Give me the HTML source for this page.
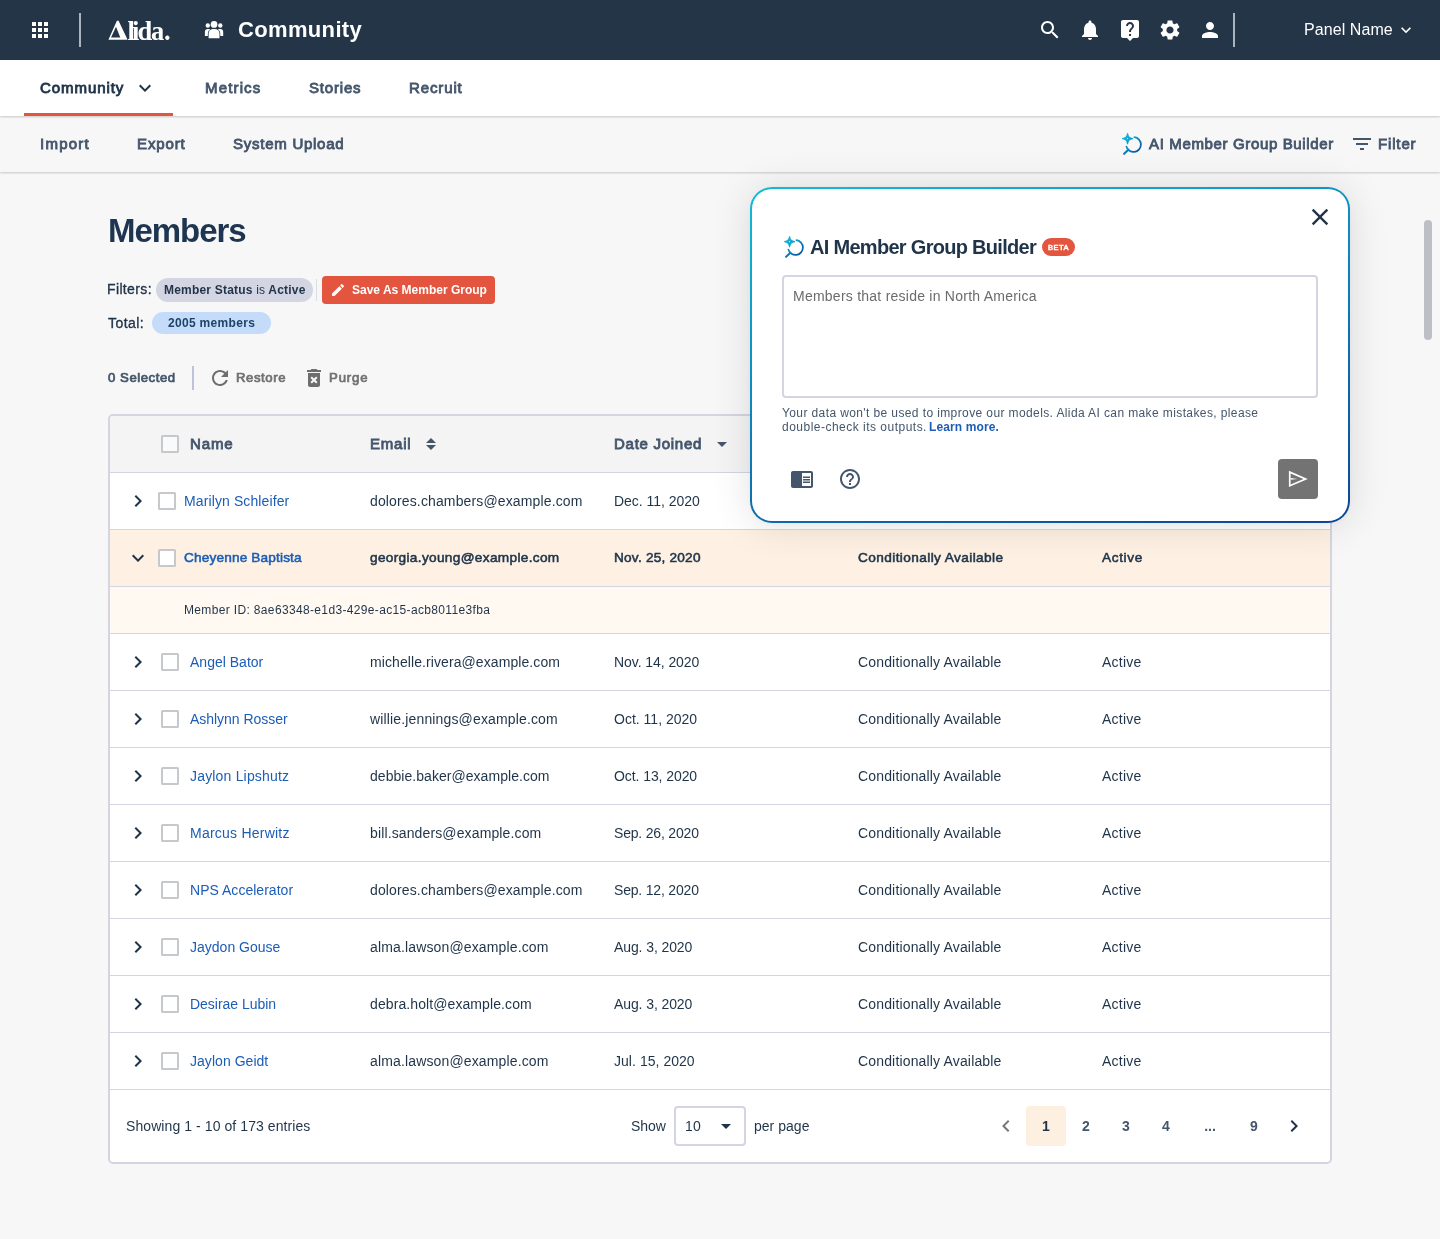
<!DOCTYPE html>
<html lang="en"><head><meta charset="utf-8"><title>Members</title>
<style>
*{box-sizing:border-box;margin:0;padding:0}
html,body{width:1440px;height:1239px;overflow:hidden}
body{position:relative;background:#f7f7f7;font-family:"Liberation Sans",sans-serif;color:#1f3349}
.a,.t,.i{position:absolute}
.t{white-space:nowrap;display:block;will-change:transform}
.i{display:block}
#hdr{left:0;top:0;width:1440px;height:60px;background:#243548}
#nav{left:0;top:60px;width:1440px;height:56px;background:#fff;box-shadow:0 1px 2px rgba(0,0,0,.2)}
#navu{left:24px;top:113px;width:149px;height:3px;background:#e4553d}
#tb{left:0;top:116px;width:1440px;height:56px;background:#f7f7f7;box-shadow:0 1px 2px rgba(0,0,0,.2)}
.vd{width:2px;background:#a9b4c0}
#tbl{left:108px;top:414px;width:1224px;height:750px;border:2px solid #d4d5e2;border-radius:5px;background:#fff;overflow:hidden}
#tbl .r{position:absolute;left:0;width:1220px;border-bottom:1px solid #d4d5e2}
.cb{width:18px;height:18px;border:2px solid #c6c9cc;border-radius:1.5px;background:#fff}
.chip{border-radius:12px}
#pop{left:750px;top:187px;width:600px;height:336px;border-radius:22px;background:linear-gradient(165deg,#10bcd8,#0a4595);box-shadow:0 2px 40px rgba(0,0,0,.12),0 1px 4px rgba(0,0,0,.03)}
#pop .in{position:absolute;left:2px;top:2px;right:2px;bottom:2px;border-radius:20px;background:#fff}
#ta{left:782px;top:275px;width:536px;height:123px;border:2px solid #d4d5e2;border-radius:4px;background:#fff}
#send{left:1278px;top:459px;width:40px;height:40px;border-radius:4px;background:#737373}
#sel{left:674px;top:1106px;width:72px;height:40px;border:2px solid #d4d5e2;border-radius:4px;background:#fff}
#pg1{left:1026px;top:1106px;width:40px;height:40px;border-radius:4px;background:#fef0e1}
#sb{left:1424px;top:220px;width:8px;height:120px;border-radius:4px;background:#bcbfc5}

</style></head>
<body>
<div class="a" id="hdr"></div>
<div class="a" id="tb"></div>
<div class="a" id="nav"></div>
<div class="a" id="navu"></div>
<svg class="i" style="left:28px;top:18px" width="24" height="24" viewBox="0 0 24 24"><path fill="#fff" d="M4 8h4V4H4v4zm6 12h4v-4h-4v4zm-6 0h4v-4H4v4zm0-6h4v-4H4v4zm6 0h4v-4h-4v4zm6-10v4h4V4h-4zm-6 4h4V4h-4v4zm6 6h4v-4h-4v4zm0 6h4v-4h-4v4z"/></svg>
<div class="a vd" style="left:79px;top:13px;height:34px"></div>
<svg class="i" style="left:104px;top:14px;will-change:transform" width="72" height="32" viewBox="104 14 72 32"><path fill="#fff" fill-rule="evenodd" d="M108.4 39.8L116.9 20.7L118.6 20.7L127.6 39.8ZM116 26.8L120.3 37.4L111 37.4Z"/><text x="127.4 132.1 137.6 150.9 163.9" y="39.8" font-family="Liberation Serif" font-weight="700" font-size="26.5" fill="#fff">lida.</text></svg>
<svg class="i" style="left:200px;top:16px" width="28" height="26" viewBox="200 16 28 26"><g fill="#fff"><circle cx="207.8" cy="25.5" r="2.2"/><circle cx="220.3" cy="25.5" r="2.2"/><path d="M204.9 36.1V32a3 3 0 0 1 3-3H210V36.1Z"/><path d="M223.2 36.1V32a3 3 0 0 0-3-3H218V36.1Z"/><g stroke="#243548" stroke-width="1.5" paint-order="stroke"><circle cx="214.05" cy="24.4" r="3.35"/><path d="M208.6 38.2V33.6a4.6 4.6 0 0 1 4.6-4.6h1.7a4.6 4.6 0 0 1 4.6 4.6V38.2Z"/></g></g></svg>
<svg class="i" style="left:1038px;top:18px" width="24" height="24" viewBox="0 0 24 24"><path fill="#fff" d="M15.5 14h-.79l-.28-.27C15.41 12.59 16 11.11 16 9.5 16 5.91 13.09 3 9.5 3S3 5.91 3 9.5 5.91 16 9.5 16c1.61 0 3.09-.59 4.23-1.57l.27.28v.79l5 4.99L20.49 19l-4.99-5zm-6 0C7.01 14 5 11.99 5 9.5S7.01 5 9.5 5 14 7.01 14 9.5 11.99 14 9.5 14z"/></svg>
<svg class="i" style="left:1078px;top:18px" width="24" height="24" viewBox="0 0 24 24"><path fill="#fff" d="M12 22c1.1 0 2-.9 2-2h-4c0 1.1.89 2 2 2zm6-6v-5c0-3.07-1.64-5.64-4.5-6.32V4c0-.83-.67-1.5-1.5-1.5s-1.5.67-1.5 1.5v.68C7.63 5.36 6 7.92 6 11v5l-2 2v1h16v-1l-2-2z"/></svg>
<svg class="i" style="left:1118px;top:18px" width="24" height="24" viewBox="0 0 24 24"><path fill="#fff" d="M19 2H5c-1.11 0-2 .9-2 2v14c0 1.1.89 2 2 2h4l3 3 3-3h4c1.1 0 2-.9 2-2V4c0-1.1-.9-2-2-2zm-6 16h-2v-2h2v2zm2.07-7.75l-.9.92C13.45 11.9 13 12.5 13 14h-2v-.5c0-1.1.45-2.1 1.17-2.83l1.24-1.26c.37-.36.59-.86.59-1.41 0-1.1-.9-2-2-2s-2 .9-2 2H8c0-2.21 1.79-4 4-4s4 1.79 4 4c0 .88-.36 1.68-.93 2.25z"/></svg>
<svg class="i" style="left:1158px;top:18px" width="24" height="24" viewBox="0 0 24 24"><path fill="#fff" d="M19.14 12.94c.04-.3.06-.61.06-.94 0-.32-.02-.64-.07-.94l2.03-1.58c.18-.14.23-.41.12-.61l-1.92-3.32c-.12-.22-.37-.29-.59-.22l-2.39.96c-.5-.38-1.03-.7-1.62-.94l-.36-2.54c-.04-.24-.24-.41-.48-.41h-3.84c-.24 0-.43.17-.47.41l-.36 2.54c-.59.24-1.13.57-1.62.94l-2.39-.96c-.22-.08-.47 0-.59.22L2.74 8.87c-.12.21-.08.47.12.61l2.03 1.58c-.05.3-.09.63-.09.94s.02.64.07.94l-2.03 1.58c-.18.14-.23.41-.12.61l1.92 3.32c.12.22.37.29.59.22l2.39-.96c.5.38 1.03.7 1.62.94l.36 2.54c.05.24.24.41.48.41h3.84c.24 0 .44-.17.47-.41l.36-2.54c.59-.24 1.13-.56 1.62-.94l2.39.96c.22.08.47 0 .59-.22l1.92-3.32c.12-.22.07-.47-.12-.61l-2.01-1.58zM12 15.6c-1.98 0-3.6-1.62-3.6-3.6s1.62-3.6 3.6-3.6 3.6 1.62 3.6 3.6-1.62 3.6-3.6 3.6z"/></svg>
<svg class="i" style="left:1198px;top:18px" width="24" height="24" viewBox="0 0 24 24"><path fill="#fff" d="M12 12c2.21 0 4-1.79 4-4s-1.79-4-4-4-4 1.79-4 4 1.79 4 4 4zm0 2c-2.67 0-8 1.34-8 4v2h16v-2c0-2.66-5.33-4-8-4z"/></svg>
<div class="a vd" style="left:1233px;top:13px;height:34px"></div>
<svg class="i" style="left:1396px;top:20px" width="20" height="20" viewBox="0 0 24 24"><path fill="#fff" d="M7.41 8.59L12 13.17l4.59-4.58L18 10l-6 6-6-6 1.41-1.41z"/></svg>
<svg class="i" style="left:133px;top:76px" width="24" height="24" viewBox="0 0 24 24"><path fill="#1f3349" d="M7.41 8.59L12 13.17l4.59-4.58L18 10l-6 6-6-6 1.41-1.41z"/></svg>
<svg class="i" style="left:1350px;top:132px" width="24" height="24" viewBox="0 0 24 24"><path fill="#44566c" d="M10 18h4v-2h-4v2zM3 6v2h18V6H3zm3 7h12v-2H6v2z"/></svg>
<svg class="i" style="left:1114px;top:128px" width="36" height="32" viewBox="1114 128 36 32"><defs><linearGradient id="g1" gradientUnits="userSpaceOnUse" x1="1123" y1="133" x2="1141" y2="153"><stop offset="0" stop-color="#14c4df"/><stop offset=".35" stop-color="#10a3cf"/><stop offset=".7" stop-color="#0b6db5"/><stop offset="1" stop-color="#0a4a9c"/></linearGradient></defs><path fill="url(#g1)" stroke="url(#g1)" stroke-width="1.2" stroke-linejoin="round" d="M1127.56 133.59Q1128.01 138.14 1132.56 138.59Q1128.01 139.04 1127.56 143.59Q1127.11 139.04 1122.56 138.59Q1127.11 138.14 1127.56 133.59Z"/><circle cx="1127.56" cy="138.59" r="0.6" fill="#f7f7f7"/><path fill="none" stroke="url(#g1)" stroke-width="1.75" stroke-linecap="round" d="M1134.40 137.21A7.4 7.4 0 1 1 1126.37 146.52"/><path fill="none" stroke="url(#g1)" stroke-width="2.1" stroke-linecap="round" d="M1128.30 149.80L1124.10 153.80"/></svg>
<div class="a chip" style="left:156px;top:278px;width:157px;height:24px;background:#d4d5e2"></div>
<div class="a" style="left:316px;top:279px;width:1px;height:22px;background:#dcdde4"></div>
<div class="a" style="left:322px;top:276px;width:173px;height:28px;border-radius:4px;background:#e3553e"></div>
<svg class="i" style="left:330px;top:282px" width="16" height="16" viewBox="0 0 24 24"><path fill="#fff" d="M3 17.25V21h3.75L17.81 9.94l-3.75-3.75L3 17.25zM20.71 7.04c.39-.39.39-1.02 0-1.41l-2.34-2.34c-.39-.39-1.02-.39-1.41 0l-1.83 1.83 3.75 3.75 1.83-1.83z"/></svg>
<div class="a chip" style="left:152px;top:312px;width:119px;height:22px;background:#c4dcfa"></div>
<div class="a" style="left:192px;top:366px;width:2px;height:24px;background:#bcc3da"></div>
<svg class="i" style="left:208px;top:366px" width="24" height="24" viewBox="0 0 24 24"><path fill="#6e6e6e" d="M17.65 6.35C16.2 4.9 14.21 4 12 4c-4.42 0-7.99 3.58-7.99 8s3.57 8 7.99 8c3.73 0 6.84-2.55 7.73-6h-2.08c-.82 2.33-3.04 4-5.65 4-3.31 0-6-2.69-6-6s2.69-6 6-6c1.66 0 3.14.69 4.22 1.78L13 11h7V4l-2.35 2.35z"/></svg>
<svg class="i" style="left:302px;top:366px" width="24" height="24" viewBox="0 0 24 24"><path fill="#6e6e6e" d="M6 19c0 1.1.9 2 2 2h8c1.1 0 2-.9 2-2V7H6v12zm2.46-7.12l1.41-1.41L12 12.59l2.12-2.12 1.41 1.41L13.41 14l2.12 2.12-1.41 1.41L12 15.41l-2.12 2.12-1.41-1.41L10.59 14l-2.13-2.12zM15.5 4l-1-1h-5l-1 1H5v2h14V4z"/></svg>
<div class="a" id="tbl"><div class="r" style="top:0px;height:57px;background:#f5f4f5"></div><div class="r" style="top:57px;height:57px;background:#fff"></div><div class="r" style="top:114px;height:57px;background:#fef1e3"></div><div class="r" style="top:171px;height:47px;background:#fff9f2"></div><div class="r" style="top:218px;height:57px;background:#fff"></div><div class="r" style="top:275px;height:57px;background:#fff"></div><div class="r" style="top:332px;height:57px;background:#fff"></div><div class="r" style="top:389px;height:57px;background:#fff"></div><div class="r" style="top:446px;height:57px;background:#fff"></div><div class="r" style="top:503px;height:57px;background:#fff"></div><div class="r" style="top:560px;height:57px;background:#fff"></div><div class="r" style="top:617px;height:57px;background:#fff"></div></div>
<div class="a cb" style="left:161px;top:435px;background:#fafafa"></div>
<svg class="i" style="left:419px;top:429px" width="24" height="24" viewBox="0 0 24 24"><path fill="#44566c" d="M7 14l5-5 5 5z"/></svg>
<svg class="i" style="left:419px;top:435px" width="24" height="24" viewBox="0 0 24 24"><path fill="#44566c" d="M7 10l5 5 5-5z"/></svg>
<svg class="i" style="left:710px;top:432px" width="24" height="24" viewBox="0 0 24 24"><path fill="#44566c" d="M7 10l5 5 5-5z"/></svg>
<svg class="i" style="left:126px;top:489px" width="24" height="24" viewBox="0 0 24 24"><path fill="#1f3349" d="M10 6L8.59 7.41 13.17 12l-4.58 4.59L10 18l6-6z"/></svg>
<div class="a cb" style="left:158px;top:492px"></div>
<svg class="i" style="left:126px;top:546px" width="24" height="24" viewBox="0 0 24 24"><path fill="#1f3349" d="M7.41 8.59L12 13.17l4.59-4.58L18 10l-6 6-6-6 1.41-1.41z"/></svg>
<div class="a cb" style="left:158px;top:549px"></div>
<svg class="i" style="left:126px;top:650px" width="24" height="24" viewBox="0 0 24 24"><path fill="#1f3349" d="M10 6L8.59 7.41 13.17 12l-4.58 4.59L10 18l6-6z"/></svg>
<div class="a cb" style="left:161px;top:653px"></div>
<svg class="i" style="left:126px;top:707px" width="24" height="24" viewBox="0 0 24 24"><path fill="#1f3349" d="M10 6L8.59 7.41 13.17 12l-4.58 4.59L10 18l6-6z"/></svg>
<div class="a cb" style="left:161px;top:710px"></div>
<svg class="i" style="left:126px;top:764px" width="24" height="24" viewBox="0 0 24 24"><path fill="#1f3349" d="M10 6L8.59 7.41 13.17 12l-4.58 4.59L10 18l6-6z"/></svg>
<div class="a cb" style="left:161px;top:767px"></div>
<svg class="i" style="left:126px;top:821px" width="24" height="24" viewBox="0 0 24 24"><path fill="#1f3349" d="M10 6L8.59 7.41 13.17 12l-4.58 4.59L10 18l6-6z"/></svg>
<div class="a cb" style="left:161px;top:824px"></div>
<svg class="i" style="left:126px;top:878px" width="24" height="24" viewBox="0 0 24 24"><path fill="#1f3349" d="M10 6L8.59 7.41 13.17 12l-4.58 4.59L10 18l6-6z"/></svg>
<div class="a cb" style="left:161px;top:881px"></div>
<svg class="i" style="left:126px;top:935px" width="24" height="24" viewBox="0 0 24 24"><path fill="#1f3349" d="M10 6L8.59 7.41 13.17 12l-4.58 4.59L10 18l6-6z"/></svg>
<div class="a cb" style="left:161px;top:938px"></div>
<svg class="i" style="left:126px;top:992px" width="24" height="24" viewBox="0 0 24 24"><path fill="#1f3349" d="M10 6L8.59 7.41 13.17 12l-4.58 4.59L10 18l6-6z"/></svg>
<div class="a cb" style="left:161px;top:995px"></div>
<svg class="i" style="left:126px;top:1049px" width="24" height="24" viewBox="0 0 24 24"><path fill="#1f3349" d="M10 6L8.59 7.41 13.17 12l-4.58 4.59L10 18l6-6z"/></svg>
<div class="a cb" style="left:161px;top:1052px"></div>
<div class="a" id="sel"></div>
<svg class="i" style="left:713.5px;top:1114px" width="24" height="24" viewBox="0 0 24 24"><path fill="#1f3349" d="M7 10l5 5 5-5z"/></svg>
<div class="a" id="pg1"></div>
<svg class="i" style="left:994px;top:1114px" width="24" height="24" viewBox="0 0 24 24"><path fill="#777" d="M15.41 7.41L14 6l-6 6 6 6 1.41-1.41L10.83 12z"/></svg>
<svg class="i" style="left:1282px;top:1114px" width="24" height="24" viewBox="0 0 24 24"><path fill="#1f3349" d="M10 6L8.59 7.41 13.17 12l-4.58 4.59L10 18l6-6z"/></svg>
<div class="a" id="sb"></div>
<div class="a" id="pop"><div class="in"></div></div>
<svg class="i" style="left:776px;top:231px" width="36" height="32" viewBox="776 231 36 32"><defs><linearGradient id="g2" gradientUnits="userSpaceOnUse" x1="785" y1="236" x2="803" y2="256"><stop offset="0" stop-color="#14c4df"/><stop offset=".35" stop-color="#10a3cf"/><stop offset=".7" stop-color="#0b6db5"/><stop offset="1" stop-color="#0a4a9c"/></linearGradient></defs><path fill="url(#g2)" stroke="url(#g2)" stroke-width="1.2" stroke-linejoin="round" d="M789.56 236.59Q790.01 241.14 794.56 241.59Q790.01 242.04 789.56 246.59Q789.11 242.04 784.56 241.59Q789.11 241.14 789.56 236.59Z"/><circle cx="789.56" cy="241.59" r="0.6" fill="#fff"/><path fill="none" stroke="url(#g2)" stroke-width="1.75" stroke-linecap="round" d="M796.40 240.21A7.4 7.4 0 1 1 788.37 249.52"/><path fill="none" stroke="url(#g2)" stroke-width="2.1" stroke-linecap="round" d="M790.30 252.80L786.10 256.80"/></svg>
<svg class="i" style="left:1306px;top:203px" width="28" height="28" viewBox="0 0 24 24"><path fill="#1f3349" d="M19 6.41L17.59 5 12 10.59 6.41 5 5 6.41 10.59 12 5 17.59 6.41 19 12 13.41 17.59 19 19 17.59 13.41 12z"/></svg>
<div class="a" style="left:1042px;top:238.3px;width:33px;height:17.4px;border-radius:9px;background:#e3553e"></div>
<div class="a" id="ta"></div>
<svg class="i" style="left:790px;top:467px" width="24" height="24" viewBox="0 0 24 24"><path fill="#43566c" d="M13 12h7v1.5h-7zm0-2.5h7V11h-7zm0 5h7V16h-7zM21 4H3c-1.1 0-2 .9-2 2v13c0 1.1.9 2 2 2h18c1.1 0 2-.9 2-2V6c0-1.1-.9-2-2-2zm0 15h-9V6h9v13z"/></svg>
<svg class="i" style="left:838px;top:467px" width="24" height="24" viewBox="0 0 24 24"><path fill="#43566c" d="M11 18h2v-2h-2v2zm1-16C6.48 2 2 6.48 2 12s4.48 10 10 10 10-4.48 10-10S17.52 2 12 2zm0 18c-4.41 0-8-3.59-8-8s3.59-8 8-8 8 3.59 8 8-3.59 8-8 8zm0-14c-2.21 0-4 1.79-4 4h2c0-1.1.9-2 2-2s2 .9 2 2c0 2-3 1.75-3 5h2c0-2.25 3-2.5 3-5 0-2.21-1.79-4-4-4z"/></svg>
<div class="a" id="send"></div>
<svg class="i" style="left:1278px;top:459px" width="40" height="40" viewBox="1278 459 40 40"><path fill="#fff" fill-rule="evenodd" d="M1288.9 470.8L1307.8 478.95L1288.9 487.1ZM1290.6 473.38L1303.5 478.95L1290.6 484.52Z"/><path fill="#fff" d="M1290.6 478.05L1297.6 478.95L1290.6 479.85Z"/></svg>
<span class="t" style="top:13px;font-size:22px;line-height:33px;font-weight:700;color:#fff;left:238.012px;letter-spacing:0.343px;">Community</span>
<span class="t" style="top:18px;font-size:16px;line-height:24px;font-weight:400;color:#fff;left:1303.55px;letter-spacing:0.072px;">Panel Name</span>
<span class="t" style="top:77.12px;font-size:15.04px;line-height:22.56px;font-weight:400;color:#1f3349;left:39.72px;letter-spacing:0.917px;-webkit-text-stroke:0.85px #1f3349;">Community</span>
<span class="t" style="top:77.12px;font-size:15.04px;line-height:22.56px;font-weight:400;color:#44566c;left:204.75px;letter-spacing:1.143px;-webkit-text-stroke:0.85px #44566c;">Metrics</span>
<span class="t" style="top:77.12px;font-size:15.04px;line-height:22.56px;font-weight:400;color:#44566c;left:309.155px;letter-spacing:0.799px;-webkit-text-stroke:0.85px #44566c;">Stories</span>
<span class="t" style="top:77.12px;font-size:15.04px;line-height:22.56px;font-weight:400;color:#44566c;left:409.15px;letter-spacing:0.858px;-webkit-text-stroke:0.85px #44566c;">Recruit</span>
<span class="t" style="top:133.12px;font-size:15.04px;line-height:22.56px;font-weight:400;color:#44566c;left:39.75px;letter-spacing:1.233px;-webkit-text-stroke:0.85px #44566c;">Import</span>
<span class="t" style="top:133.12px;font-size:15.04px;line-height:22.56px;font-weight:400;color:#44566c;left:137.15px;letter-spacing:0.864px;-webkit-text-stroke:0.85px #44566c;">Export</span>
<span class="t" style="top:133.12px;font-size:15.04px;line-height:22.56px;font-weight:400;color:#44566c;left:233.155px;letter-spacing:0.727px;-webkit-text-stroke:0.85px #44566c;">System Upload</span>
<span class="t" style="top:133.12px;font-size:15.04px;line-height:22.56px;font-weight:400;color:#44566c;left:1148.83px;letter-spacing:0.627px;-webkit-text-stroke:0.85px #44566c;">AI Member Group Builder</span>
<span class="t" style="top:133.12px;font-size:15.04px;line-height:22.56px;font-weight:400;color:#44566c;left:1377.85px;letter-spacing:0.838px;-webkit-text-stroke:0.85px #44566c;">Filter</span>
<span class="t" style="top:205.85px;font-size:33px;line-height:49.5px;font-weight:700;color:#1d3550;left:107.737px;letter-spacing:-1.048px;">Members</span>
<span class="t" style="top:279.1px;font-size:14px;line-height:21px;font-weight:400;color:#1f3349;left:107.376px;letter-spacing:0.360px;-webkit-text-stroke:0.34px #1f3349;">Filters:</span>
<span class="t" style="top:280.8px;font-size:12px;line-height:18px;font-weight:700;color:#1f3349;left:163.75px;letter-spacing:0.201px;">Member Status <span style="font-weight:400">is</span> Active</span>
<span class="t" style="top:280.8px;font-size:12px;line-height:18px;font-weight:700;color:#fff;left:352.113px;letter-spacing:-0.003px;">Save As Member Group</span>
<span class="t" style="top:312.5px;font-size:14px;line-height:21px;font-weight:400;color:#1f3349;left:108.251px;letter-spacing:0.435px;-webkit-text-stroke:0.34px #1f3349;">Total:</span>
<span class="t" style="top:314px;font-size:12px;line-height:18px;font-weight:700;color:#1d4468;left:167.925px;letter-spacing:0.316px;">2005 members</span>
<span class="t" style="top:368.13px;font-size:13.16px;line-height:19.74px;font-weight:400;color:#44566c;left:108.259px;letter-spacing:0.549px;-webkit-text-stroke:0.74px #44566c;">0 Selected</span>
<span class="t" style="top:368.13px;font-size:13.16px;line-height:19.74px;font-weight:400;color:#717171;left:235.642px;letter-spacing:0.574px;-webkit-text-stroke:0.74px #717171;">Restore</span>
<span class="t" style="top:368.13px;font-size:13.16px;line-height:19.74px;font-weight:400;color:#717171;left:329.142px;letter-spacing:0.878px;-webkit-text-stroke:0.74px #717171;">Purge</span>
<span class="t" style="top:432.72px;font-size:15.04px;line-height:22.56px;font-weight:400;color:#44566c;left:190px;letter-spacing:0.858px;-webkit-text-stroke:0.85px #44566c;">Name</span>
<span class="t" style="top:432.72px;font-size:15.04px;line-height:22.56px;font-weight:400;color:#44566c;left:370px;letter-spacing:0.743px;-webkit-text-stroke:0.85px #44566c;">Email</span>
<span class="t" style="top:432.72px;font-size:15.04px;line-height:22.56px;font-weight:400;color:#44566c;left:614px;letter-spacing:0.709px;-webkit-text-stroke:0.85px #44566c;">Date Joined</span>
<span class="t" style="top:490.5px;font-size:14px;line-height:21px;font-weight:400;color:#1c5db6;left:184px;letter-spacing:0.111px;">Marilyn Schleifer</span>
<span class="t" style="top:490.5px;font-size:14px;line-height:21px;font-weight:400;color:#1f3349;left:370px;letter-spacing:0.136px;">dolores.chambers@example.com</span>
<span class="t" style="top:490.5px;font-size:14px;line-height:21px;font-weight:400;color:#1f3349;left:614px;letter-spacing:-0.024px;">Dec. 11, 2020</span>
<span class="t" style="top:548.163px;font-size:13.65px;line-height:20.475px;font-weight:400;color:#1c5db6;left:184px;letter-spacing:0.147px;-webkit-text-stroke:0.56px #1c5db6;">Cheyenne Baptista</span>
<span class="t" style="top:548.163px;font-size:13.65px;line-height:20.475px;font-weight:400;color:#1f3349;left:370px;letter-spacing:0.325px;-webkit-text-stroke:0.56px #1f3349;">georgia.young@example.com</span>
<span class="t" style="top:548.163px;font-size:13.65px;line-height:20.475px;font-weight:400;color:#1f3349;left:614px;letter-spacing:0.212px;-webkit-text-stroke:0.56px #1f3349;">Nov. 25, 2020</span>
<span class="t" style="top:548.163px;font-size:13.65px;line-height:20.475px;font-weight:400;color:#1f3349;left:858px;letter-spacing:0.401px;-webkit-text-stroke:0.56px #1f3349;">Conditionally Available</span>
<span class="t" style="top:548.163px;font-size:13.65px;line-height:20.475px;font-weight:400;color:#1f3349;left:1102px;letter-spacing:0.623px;-webkit-text-stroke:0.56px #1f3349;">Active</span>
<span class="t" style="top:651.5px;font-size:14px;line-height:21px;font-weight:400;color:#1c5db6;left:190px;letter-spacing:0.010px;">Angel Bator</span>
<span class="t" style="top:651.5px;font-size:14px;line-height:21px;font-weight:400;color:#1f3349;left:370px;letter-spacing:0.085px;">michelle.rivera@example.com</span>
<span class="t" style="top:651.5px;font-size:14px;line-height:21px;font-weight:400;color:#1f3349;left:614px;letter-spacing:-0.066px;">Nov. 14, 2020</span>
<span class="t" style="top:651.5px;font-size:14px;line-height:21px;font-weight:400;color:#1f3349;left:858px;letter-spacing:0.160px;">Conditionally Available</span>
<span class="t" style="top:651.5px;font-size:14px;line-height:21px;font-weight:400;color:#1f3349;left:1102px;letter-spacing:0.248px;">Active</span>
<span class="t" style="top:708.5px;font-size:14px;line-height:21px;font-weight:400;color:#1c5db6;left:190px;letter-spacing:-0.037px;">Ashlynn Rosser</span>
<span class="t" style="top:708.5px;font-size:14px;line-height:21px;font-weight:400;color:#1f3349;left:370px;letter-spacing:0.149px;">willie.jennings@example.com</span>
<span class="t" style="top:708.5px;font-size:14px;line-height:21px;font-weight:400;color:#1f3349;left:614px;letter-spacing:0.011px;">Oct. 11, 2020</span>
<span class="t" style="top:708.5px;font-size:14px;line-height:21px;font-weight:400;color:#1f3349;left:858px;letter-spacing:0.160px;">Conditionally Available</span>
<span class="t" style="top:708.5px;font-size:14px;line-height:21px;font-weight:400;color:#1f3349;left:1102px;letter-spacing:0.248px;">Active</span>
<span class="t" style="top:765.5px;font-size:14px;line-height:21px;font-weight:400;color:#1c5db6;left:190px;letter-spacing:0.181px;">Jaylon Lipshutz</span>
<span class="t" style="top:765.5px;font-size:14px;line-height:21px;font-weight:400;color:#1f3349;left:370px;letter-spacing:0.044px;">debbie.baker@example.com</span>
<span class="t" style="top:765.5px;font-size:14px;line-height:21px;font-weight:400;color:#1f3349;left:614px;letter-spacing:-0.076px;">Oct. 13, 2020</span>
<span class="t" style="top:765.5px;font-size:14px;line-height:21px;font-weight:400;color:#1f3349;left:858px;letter-spacing:0.160px;">Conditionally Available</span>
<span class="t" style="top:765.5px;font-size:14px;line-height:21px;font-weight:400;color:#1f3349;left:1102px;letter-spacing:0.248px;">Active</span>
<span class="t" style="top:822.5px;font-size:14px;line-height:21px;font-weight:400;color:#1c5db6;left:190px;letter-spacing:0.230px;">Marcus Herwitz</span>
<span class="t" style="top:822.5px;font-size:14px;line-height:21px;font-weight:400;color:#1f3349;left:370px;letter-spacing:0.128px;">bill.sanders@example.com</span>
<span class="t" style="top:822.5px;font-size:14px;line-height:21px;font-weight:400;color:#1f3349;left:614px;letter-spacing:-0.187px;">Sep. 26, 2020</span>
<span class="t" style="top:822.5px;font-size:14px;line-height:21px;font-weight:400;color:#1f3349;left:858px;letter-spacing:0.160px;">Conditionally Available</span>
<span class="t" style="top:822.5px;font-size:14px;line-height:21px;font-weight:400;color:#1f3349;left:1102px;letter-spacing:0.248px;">Active</span>
<span class="t" style="top:879.5px;font-size:14px;line-height:21px;font-weight:400;color:#1c5db6;left:190px;letter-spacing:0.025px;">NPS Accelerator</span>
<span class="t" style="top:879.5px;font-size:14px;line-height:21px;font-weight:400;color:#1f3349;left:370px;letter-spacing:0.136px;">dolores.chambers@example.com</span>
<span class="t" style="top:879.5px;font-size:14px;line-height:21px;font-weight:400;color:#1f3349;left:614px;letter-spacing:-0.187px;">Sep. 12, 2020</span>
<span class="t" style="top:879.5px;font-size:14px;line-height:21px;font-weight:400;color:#1f3349;left:858px;letter-spacing:0.160px;">Conditionally Available</span>
<span class="t" style="top:879.5px;font-size:14px;line-height:21px;font-weight:400;color:#1f3349;left:1102px;letter-spacing:0.248px;">Active</span>
<span class="t" style="top:936.5px;font-size:14px;line-height:21px;font-weight:400;color:#1c5db6;left:190px;letter-spacing:0.006px;">Jaydon Gouse</span>
<span class="t" style="top:936.5px;font-size:14px;line-height:21px;font-weight:400;color:#1f3349;left:370px;letter-spacing:0.143px;">alma.lawson@example.com</span>
<span class="t" style="top:936.5px;font-size:14px;line-height:21px;font-weight:400;color:#1f3349;left:614px;letter-spacing:-0.096px;">Aug. 3, 2020</span>
<span class="t" style="top:936.5px;font-size:14px;line-height:21px;font-weight:400;color:#1f3349;left:858px;letter-spacing:0.160px;">Conditionally Available</span>
<span class="t" style="top:936.5px;font-size:14px;line-height:21px;font-weight:400;color:#1f3349;left:1102px;letter-spacing:0.248px;">Active</span>
<span class="t" style="top:993.5px;font-size:14px;line-height:21px;font-weight:400;color:#1c5db6;left:190px;letter-spacing:-0.025px;">Desirae Lubin</span>
<span class="t" style="top:993.5px;font-size:14px;line-height:21px;font-weight:400;color:#1f3349;left:370px;letter-spacing:0.094px;">debra.holt@example.com</span>
<span class="t" style="top:993.5px;font-size:14px;line-height:21px;font-weight:400;color:#1f3349;left:614px;letter-spacing:-0.096px;">Aug. 3, 2020</span>
<span class="t" style="top:993.5px;font-size:14px;line-height:21px;font-weight:400;color:#1f3349;left:858px;letter-spacing:0.160px;">Conditionally Available</span>
<span class="t" style="top:993.5px;font-size:14px;line-height:21px;font-weight:400;color:#1f3349;left:1102px;letter-spacing:0.248px;">Active</span>
<span class="t" style="top:1050.5px;font-size:14px;line-height:21px;font-weight:400;color:#1c5db6;left:190px;letter-spacing:0.039px;">Jaylon Geidt</span>
<span class="t" style="top:1050.5px;font-size:14px;line-height:21px;font-weight:400;color:#1f3349;left:370px;letter-spacing:0.143px;">alma.lawson@example.com</span>
<span class="t" style="top:1050.5px;font-size:14px;line-height:21px;font-weight:400;color:#1f3349;left:614px;letter-spacing:0.040px;">Jul. 15, 2020</span>
<span class="t" style="top:1050.5px;font-size:14px;line-height:21px;font-weight:400;color:#1f3349;left:858px;letter-spacing:0.160px;">Conditionally Available</span>
<span class="t" style="top:1050.5px;font-size:14px;line-height:21px;font-weight:400;color:#1f3349;left:1102px;letter-spacing:0.248px;">Active</span>
<span class="t" style="top:601px;font-size:12px;line-height:18px;font-weight:400;color:#1f3349;left:184px;letter-spacing:0.347px;">Member ID: 8ae63348-e1d3-429e-ac15-acb8011e3fba</span>
<span class="t" style="top:1115.5px;font-size:14px;line-height:21px;font-weight:400;color:#1f3349;left:125.562px;letter-spacing:0.080px;">Showing 1 - 10 of 173 entries</span>
<span class="t" style="top:1115.5px;font-size:14px;line-height:21px;font-weight:400;color:#1f3349;left:630.562px;letter-spacing:-0.088px;">Show</span>
<span class="t" style="top:1115.5px;font-size:14px;line-height:21px;font-weight:400;color:#1f3349;left:685.425px;letter-spacing:0.246px;">10</span>
<span class="t" style="top:1115.5px;font-size:14px;line-height:21px;font-weight:400;color:#1f3349;left:753.625px;letter-spacing:0.023px;">per page</span>
<span class="t" style="top:1115.5px;font-size:14px;line-height:21px;font-weight:700;color:#1f3349;left:996px;width:100px;text-align:center;">1</span>
<span class="t" style="top:1115.5px;font-size:14px;line-height:21px;font-weight:700;color:#44566c;left:1036px;width:100px;text-align:center;">2</span>
<span class="t" style="top:1115.5px;font-size:14px;line-height:21px;font-weight:700;color:#44566c;left:1076px;width:100px;text-align:center;">3</span>
<span class="t" style="top:1115.5px;font-size:14px;line-height:21px;font-weight:700;color:#44566c;left:1116px;width:100px;text-align:center;">4</span>
<span class="t" style="top:1115.5px;font-size:14px;line-height:21px;font-weight:700;color:#44566c;left:1160px;width:100px;text-align:center;">...</span>
<span class="t" style="top:1115.5px;font-size:14px;line-height:21px;font-weight:700;color:#44566c;left:1204px;width:100px;text-align:center;">9</span>
<span class="t" style="top:232px;font-size:20px;line-height:30px;font-weight:700;color:#1f3349;left:810.487px;letter-spacing:-0.702px;">AI Member Group Builder</span>
<span class="t" style="top:241.76px;font-size:7.52px;line-height:11.28px;font-weight:400;color:#fff;left:1047.59px;letter-spacing:0.441px;-webkit-text-stroke:0.55px #fff;">BETA</span>
<span class="t" style="top:285.5px;font-size:14px;line-height:21px;font-weight:400;color:#6b6b6b;left:792.906px;letter-spacing:0.243px;">Members that reside in North America</span>
<span class="t" style="top:404px;font-size:12px;line-height:18px;font-weight:400;color:#44566c;left:782.112px;letter-spacing:0.391px;">Your data won&#39;t be used to improve our models. Alida AI can make mistakes, please</span>
<span class="t" style="top:418px;font-size:12px;line-height:18px;font-weight:400;color:#44566c;left:781.925px;letter-spacing:0.488px;">double-check its outputs.</span>
<span class="t" style="top:418px;font-size:12px;line-height:18px;font-weight:700;color:#1c5db6;left:928.85px;letter-spacing:0.126px;">Learn more.</span>
</body></html>
